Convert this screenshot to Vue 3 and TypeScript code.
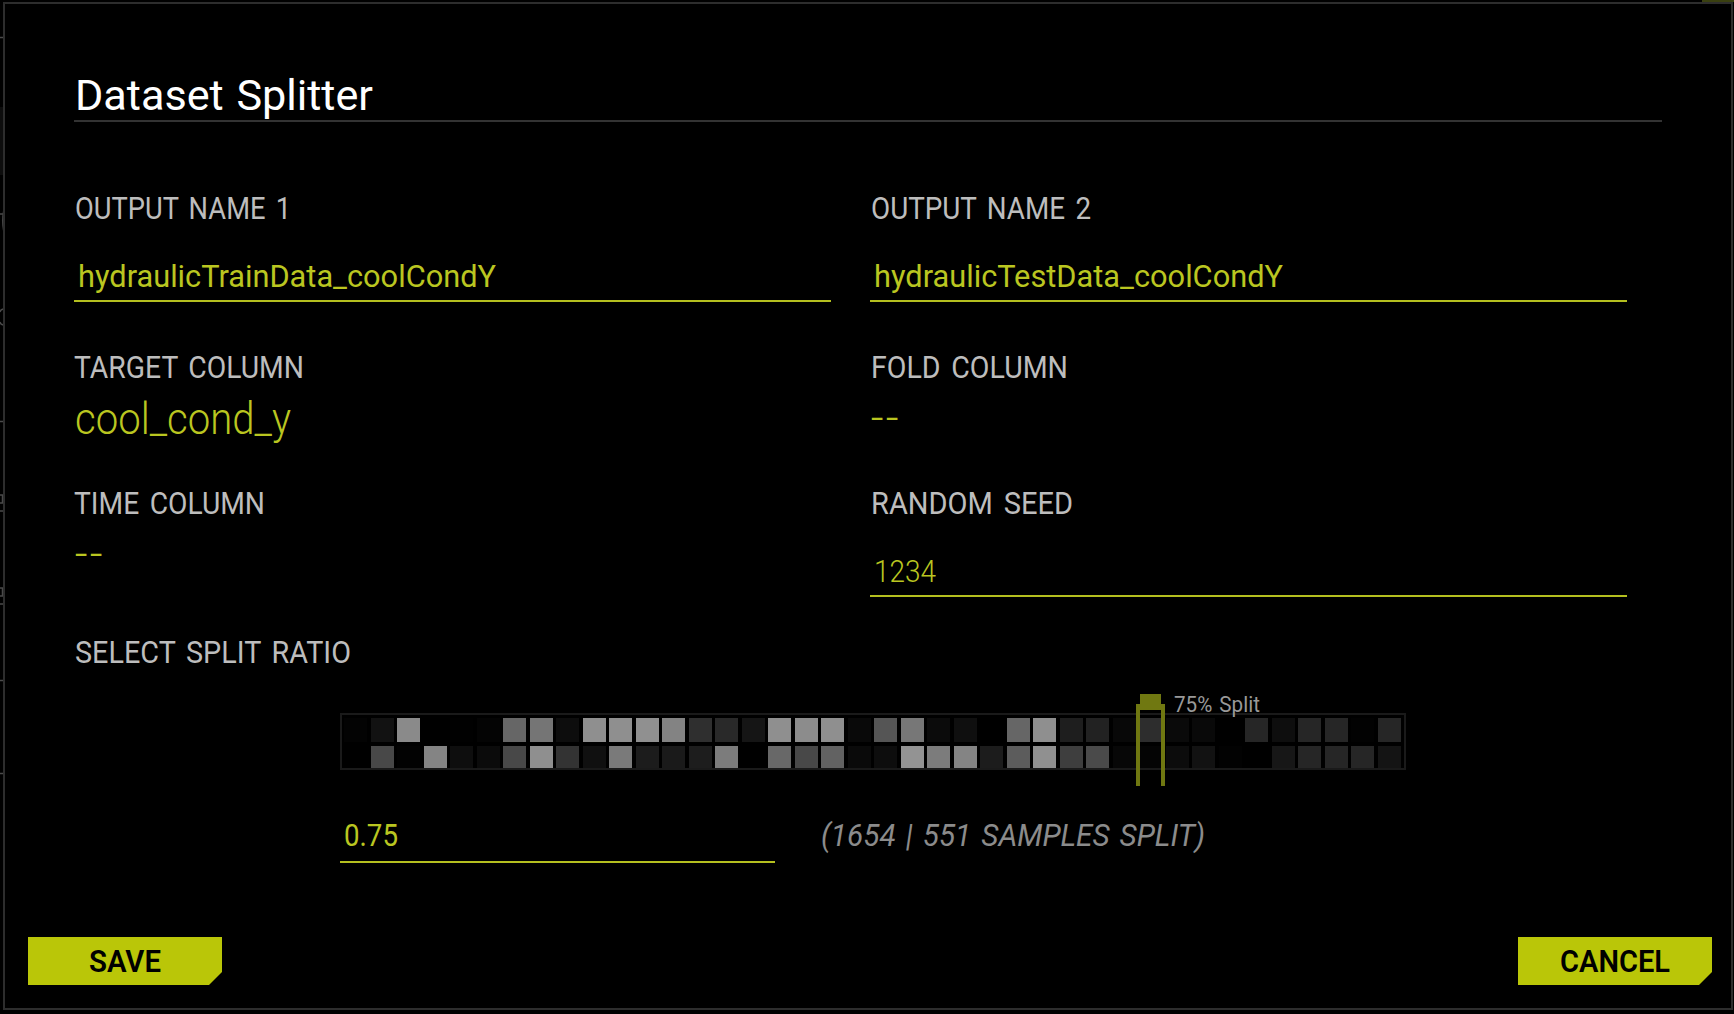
<script setup lang="ts">
import { h, ref, type FunctionalComponent } from 'vue'

interface FitProps {
  text: string
  width: number
  size?: number
}

// Single line of text condensed or stretched to a given width
const FitText: FunctionalComponent<FitProps> = (props) =>
  h('svg', { width: props.width, height: 40, overflow: 'visible', style: { fontSize: (props.size ?? 32) + 'px' } }, [
    h('text', { x: 0, y: 30, textLength: props.width, lengthAdjust: 'spacingAndGlyphs' }, props.text),
  ])
FitText.props = ['text', 'width', 'size']

const rows = ref<string[][]>([
  ('03 12 8a 00 01 04 66 75 0d 8f 8f 90 83 2f 29 15 8f 8c 8f 09 55 77 0b 0f 00 66 8f ' +
    '1e 22 08 2d 0a 09 00 26 0e 26 26 02 26').split(' '),
  ('00 48 02 84 0e 0b 48 8f 33 10 7a 1c 1a 1d 7c 00 68 48 62 0a 0d 93 7c 84 1c 5c 90 ' +
    '3e 4a 07 04 0c 12 02 00 17 26 26 26 14').split(' '),
])
</script>

<template>
  <div class="page">
    <svg class="behind" width="4" height="1014">
      <path d="M0 107h3v68H0z" fill="#0d0d0d" />
      <path
        d="M0 37.5h3M0 421.5h3M0 680.5h3M0 773.5h3M0 214h3M0 495h2.5v8H0M0 511h3M0 588h2.5v8H0M0 604h3M3 309l-2 1-1 2M0 322l1 2 2 1"
        fill="none"
        stroke="#4a4a4a"
        stroke-width="1.5"
      />
      <path d="M3 211q-2 9 0 20z" fill="#444" />
    </svg>
    <div class="corner"></div>

    <section class="modal">
      <header class="head">
        <FitText class="title" text="Dataset Splitter" :width="298" :size="43" />
      </header>

      <div class="fields">
        <div class="field">
          <FitText class="label" text="OUTPUT NAME 1" :width="216" />
          <div class="input"><FitText text="hydraulicTrainData_coolCondY" :width="418" :size="31.5" /></div>
        </div>
        <div class="field">
          <FitText class="label" text="OUTPUT NAME 2" :width="220" />
          <div class="input"><FitText text="hydraulicTestData_coolCondY" :width="409" :size="31.5" /></div>
        </div>
        <div class="field">
          <FitText class="label tee" text="TARGET COLUMN" :width="230" />
          <FitText class="value light" text="cool_cond_y" :width="216" :size="45" />
        </div>
        <div class="field">
          <FitText class="label" text="FOLD COLUMN" :width="197" />
          <FitText class="dash" text="--" :width="30" />
        </div>
        <div class="field">
          <FitText class="label tee" text="TIME COLUMN" :width="191" />
          <FitText class="dash" text="--" :width="30" />
        </div>
        <div class="field">
          <FitText class="label" text="RANDOM SEED" :width="202" />
          <div class="input light"><FitText text="1234" :width="62" /></div>
        </div>
      </div>

      <FitText class="label" text="SELECT SPLIT RATIO" :width="276" />

      <div class="split">
        <div class="strip">
          <div v-for="(row, r) in rows" :key="r" class="row">
            <i v-for="(v, c) in row" :key="c" :style="{ background: '#' + v + v + v }"></i>
          </div>
          <div class="handle"><div class="knob"></div></div>
          <FitText class="tip" text="75% Split" :width="86" :size="21.5" />
        </div>
        <div class="ratio">
          <div class="input"><FitText text="0.75" :width="54" /></div>
          <FitText class="samples" text="(1654 | 551 SAMPLES SPLIT)" :width="384" />
        </div>
      </div>

      <footer class="foot">
        <button><FitText text="SAVE" :width="72" :size="31.5" /></button>
        <button><FitText text="CANCEL" :width="110" :size="31.5" /></button>
      </footer>
    </section>
  </div>
</template>

<style>
body {
  background: #000;
  overflow: hidden;
}
</style>

<style scoped>
.page {
  position: relative;
  box-sizing: border-box;
  width: 1734px;
  height: 1014px;
  padding: 2px 1px 4px 3px;
  background: #000;
  font-family: Roboto, 'Liberation Sans', sans-serif;
  overflow: hidden;
}
.page svg {
  display: block;
  flex: none;
}
.behind {
  position: absolute;
  left: 0;
  top: 0;
}
.corner {
  position: absolute;
  right: 0;
  top: 0;
  width: 32px;
  height: 2px;
  background: #3a4010;
}
.modal {
  position: relative;
  box-sizing: border-box;
  display: flex;
  flex-direction: column;
  height: 1008px;
  border: 2px solid #2d2d2d;
  padding: 0 19px 0 69px;
  background: #000;
}
.head {
  box-sizing: border-box;
  width: 1588px;
  height: 118px;
  padding: 76px 0 0 1px;
  border-bottom: 2px solid #333;
}
.title {
  fill: #fff;
  word-spacing: 2px;
}
.fields {
  display: grid;
  grid-template-columns: 757px 757px;
  column-gap: 39px;
  grid-template-rows: 159px 136px 149px;
  margin-top: 67px;
}
.label {
  margin-left: 0.5px;
  fill: #bdbdbd;
  word-spacing: 4px;
}
.tee {
  margin-left: 0;
}
.input {
  box-sizing: border-box;
  height: 45px;
  padding-left: 4px;
  border-bottom: 2px solid #b4bf1f;
  fill: #bac620;
}
.field .input {
  margin-top: 28px;
}
.value {
  margin: 16px 0 0 1px;
  fill: #bac620;
}
.light {
  font-weight: 300;
}
.dash {
  margin: 10px 0 0 1px;
  fill: #bac620;
  letter-spacing: 2px;
}
.split {
  width: 1066px;
  margin: 40px 0 0 266px;
}
.strip {
  position: relative;
  box-sizing: border-box;
  display: flex;
  flex-direction: column;
  gap: 4px;
  height: 57px;
  padding: 3px 0 0 2px;
  border: 2px solid #1a1a1a;
}
.row {
  display: flex;
  gap: 3.5px;
  height: 24px;
}
.row + .row {
  height: 22px;
}
.row i {
  flex: none;
  width: 23px;
}
.handle {
  position: absolute;
  left: 794px;
  top: -11px;
  box-sizing: border-box;
  width: 29px;
  height: 82px;
  border: solid #707811;
  border-width: 0 4px;
}
.knob {
  height: 16px;
  margin-top: -10px;
  background: #707811;
}
.tip {
  position: absolute;
  left: 832px;
  top: -33px;
  fill: #999;
  word-spacing: 2px;
}
.ratio {
  display: flex;
  gap: 46px;
  margin-top: 46px;
}
.ratio .input {
  width: 435px;
  height: 47px;
}
.samples {
  fill: #8b8b8b;
  font-style: italic;
  word-spacing: 3px;
}
.foot {
  display: flex;
  justify-content: space-between;
  margin: 74px 0 0 -46px;
}
button {
  display: flex;
  justify-content: center;
  width: 194px;
  height: 48px;
  padding: 5px 0 0;
  border: 0;
  background: #bac608;
  clip-path: polygon(0 0, 100% 0, 100% 35px, 181px 100%, 0 100%);
  font-family: inherit;
  font-weight: 600;
  fill: #000;
}
</style>
